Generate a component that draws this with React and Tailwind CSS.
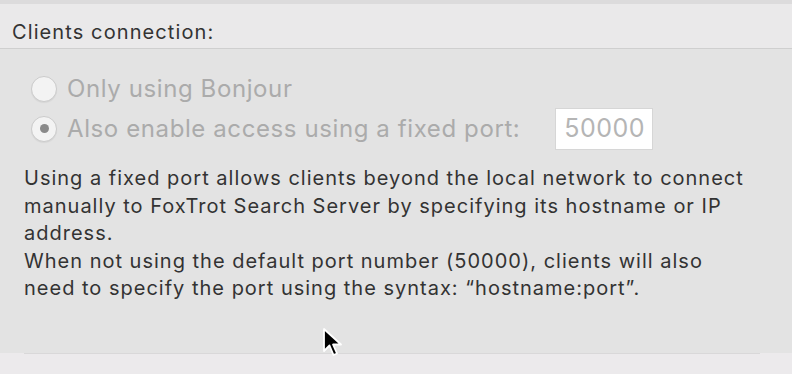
import React from "react";

function Radio({ checked }) {
  return (
    <div className="w-[26px] h-[26px] rounded-full border border-[#cbcbcb] bg-[#f3f3f3] flex items-center justify-center shrink-0 shadow-[0_1px_1px_rgba(0,0,0,0.06)]">
      {checked && <div className="w-[9px] h-[9px] rounded-full bg-[#8a8a8a]" />}
    </div>
  );
}

export default function App() {
  return (
    <div
      className="w-[792px] h-[374px] bg-[#e3e3e3] flex flex-col overflow-hidden relative"
      style={{ fontFamily: "Inter, 'Liberation Sans', sans-serif" }}
    >
      <div className="h-[4px] bg-[#dcdbdc]" />
      <div className="h-[45px] bg-[#eae9ea] border-b border-[#cfcfcf] flex items-end px-[12px] pb-[6px]">
        <span className="text-[20px] tracking-[1.1px] text-[#333333] leading-none">Clients connection:</span>
      </div>
      <div className="flex-1 flex flex-col pl-[31px] pt-[26px]">
        <div className="flex items-center gap-[10px] h-[27px]">
          <Radio />
          <span className="text-[24px] tracking-[0.6px] text-[#ababab] leading-none">Only using Bonjour</span>
        </div>
        <div className="flex items-center gap-[10px] h-[27px] mt-[13px]">
          <Radio checked />
          <span className="text-[24px] tracking-[0.6px] text-[#ababab] leading-none">Also enable access using a fixed port:</span>
          <div className="ml-[25px] w-[98px] h-[42px] bg-white border border-[#d6d6d6] flex items-center pl-[8px]">
            <span className="text-[25px] tracking-[0.5px] text-[#b5b5b5] leading-none">50000</span>
          </div>
        </div>
        <div className="mt-[23px] -ml-[7px] text-[20px] tracking-[1px] leading-[27.6px] text-[#333333]">
          <div>Using a fixed port allows clients beyond the local network to connect</div>
          <div>manually to FoxTrot Search Server by specifying its hostname or IP</div>
          <div>address.</div>
          <div>When not using the default port number (50000), clients will also</div>
          <div>need to specify the port using the syntax: “hostname:port”.</div>
        </div>
      </div>
      <div className="h-[21px] bg-[#eceaec] relative">
        <div className="absolute top-0 left-[24px] right-[32px] h-px bg-[#d9d8d9]" />
      </div>
      <svg className="absolute left-[322px] top-[327px]" width="26" height="32" viewBox="0 0 26 32">
        <path d="M2 2 L2 24 L7.5 18.5 L11.5 28 L15 26.5 L11 17.5 L19 17.5 Z" fill="#000" stroke="#fff" strokeWidth="1.8" strokeLinejoin="round" />
      </svg>
    </div>
  );
}
